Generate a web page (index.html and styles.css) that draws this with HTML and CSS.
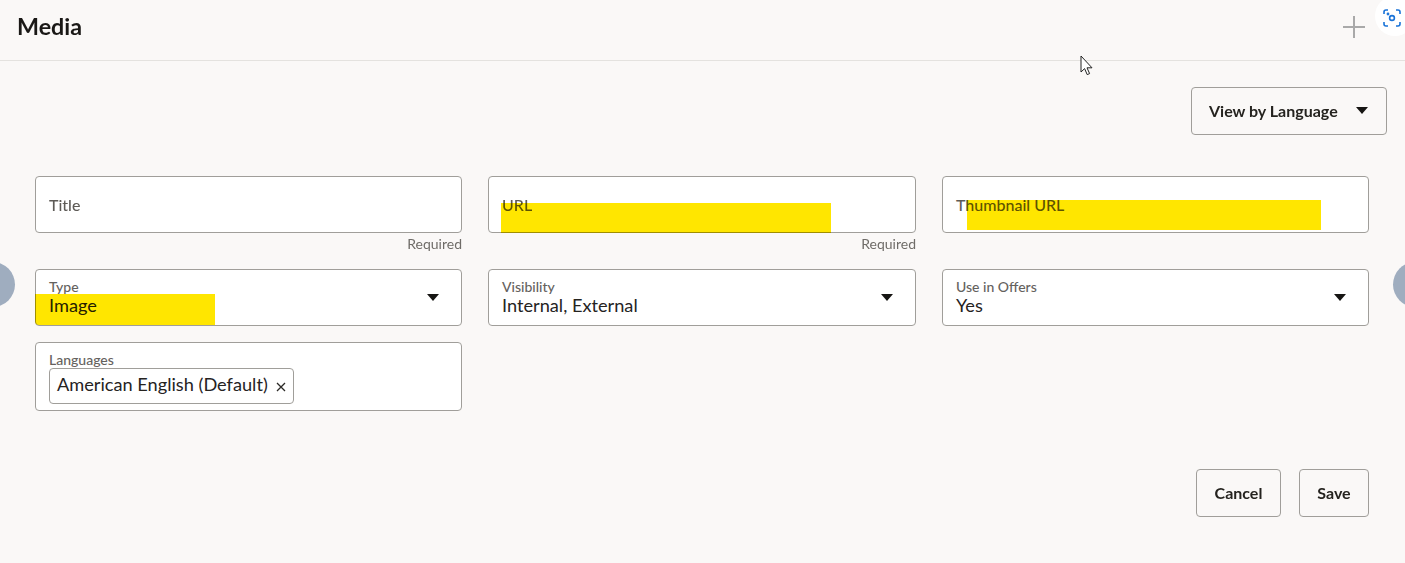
FILE: index.html
```html
<!DOCTYPE html>
<html lang="en">
<head>
<meta charset="utf-8">
<title>Media</title>
<link rel="stylesheet" href="styles.css">
</head>
<body>
<div class="page">
  <header class="header">
    <h1 class="title">Media</h1>
    <svg class="plus" width="24" height="24" viewBox="0 0 24 24"><path d="M12 1v22M1 12h22" stroke="#a9a9a9" stroke-width="2" fill="none"/></svg>
  </header>
  <div class="toolbar">
    <button class="btn btn-lang">View by Language<span class="caret"></span></button>
  </div>
  <form class="form">
    <div class="cell">
      <div class="field field-empty"><span class="placeholder">Title</span></div>
      <div class="help">Required</div>
    </div>
    <div class="cell">
      <div class="field field-empty"><span class="placeholder">URL</span><i class="mark mark-url"></i></div>
      <div class="help">Required</div>
    </div>
    <div class="cell">
      <div class="field field-empty"><span class="placeholder">Thumbnail URL</span><i class="mark mark-thumb"></i></div>
    </div>
    <div class="cell">
      <div class="field field-select">
        <div class="stack"><span class="label">Type</span><span class="value">Image</span></div>
        <span class="caret"></span><i class="mark mark-type"></i>
      </div>
    </div>
    <div class="cell">
      <div class="field field-select">
        <div class="stack"><span class="label">Visibility</span><span class="value">Internal, External</span></div>
        <span class="caret"></span>
      </div>
    </div>
    <div class="cell">
      <div class="field field-select">
        <div class="stack"><span class="label">Use in Offers</span><span class="value">Yes</span></div>
        <span class="caret"></span>
      </div>
    </div>
    <div class="cell">
      <div class="field field-chips">
        <span class="label">Languages</span>
        <span class="chip">American English (Default)<svg class="chip-x" width="10" height="10" viewBox="0 0 10 10"><path d="M1 1l8 8M9 1l-8 8" stroke="#2b2926" stroke-width="1.3" fill="none"/></svg></span>
      </div>
    </div>
  </form>
  <footer class="footer">
    <button class="btn btn-cancel">Cancel</button>
    <button class="btn btn-save">Save</button>
  </footer>
</div>
<span class="side side-left"></span>
<span class="side side-right"></span>
<svg class="pointer" width="14" height="22" viewBox="0 0 14 22"><path d="M1 1v16l3.6-3.4 2.6 6 2.4-1-2.6-5.8h5z" fill="#fff" stroke="#222" stroke-width="1"/></svg>
<span class="badge">
  <svg width="18" height="18" viewBox="0 0 18 18" fill="none" stroke="#1a73d8" stroke-width="1.6"><path d="M1 5V3a2 2 0 0 1 2-2h2M13 1h2a2 2 0 0 1 2 2v2M17 13v2a2 2 0 0 1-2 2h-2M5 17H3a2 2 0 0 1-2-2v-2"/><circle cx="9" cy="9" r="2.4"/><circle cx="5" cy="5" r=".6"/></svg>
</span>
</body>
</html>
```
FILE: styles.css
```css
* { box-sizing: border-box; }
html, body { margin: 0; height: 100%; }
body {
  background: #faf8f7;
  color: #201e1c;
  font-family: Lato, "Noto Sans", sans-serif;
  overflow: hidden;
  position: relative;
}
.page { display: flex; flex-direction: column; }
.header {
  height: 61px;
  border-bottom: 1px solid #e4e2df;
  display: flex;
  align-items: center;
  justify-content: space-between;
  padding: 0 39px 0 17px;
}
.title { margin: 0 0 9px; font-size: 23.3px; font-weight: 700; color: #1a1816; }
.plus { margin-top: -6px; }
.toolbar { display: flex; justify-content: flex-end; padding: 26px 18px 0 0; }
.btn {
  font: 700 16px Lato, "Noto Sans", sans-serif;
  color: #25231f;
  background: transparent;
  border: 1px solid #a09e9a;
  border-radius: 4px;
  height: 48px;
  padding: 0 0 2px;
}
.btn-lang {
  width: 196px;
  display: flex;
  align-items: center;
  justify-content: space-between;
  padding: 0 18px 2px 17px;
}
.caret {
  width: 0;
  height: 0;
  border-left: 6.5px solid transparent;
  border-right: 6.5px solid transparent;
  border-top: 7px solid #161513;
}
.form {
  display: grid;
  grid-template-columns: 427px 428px 427px;
  column-gap: 26px;
  padding: 41px 0 0 35px;
}
.cell { display: flex; flex-direction: column; margin-bottom: 16px; }
.field {
  position: relative;
  height: 57px;
  background: #fff;
  border: 1px solid #a09e9a;
  border-radius: 4px;
  padding: 0 13px;
}
.field-empty { display: flex; align-items: center; }
.placeholder { font-size: 16px; font-weight: 500; color: #5e5b57; }
.field-select { display: flex; align-items: center; justify-content: space-between; padding-right: 22px; }
.stack { display: flex; flex-direction: column; padding-bottom: 2px; }
.label { font-size: 14px; line-height: 17px; font-weight: 500; color: #65625e; display: block; }
.value { font-size: 18.2px; line-height: 21px; color: #25231f; }
.field-chips { height: 69px; padding-top: 8px; }
.chip {
  display: inline-flex;
  align-items: center;
  justify-content: space-between;
  width: 245px;
  height: 36px;
  padding: 0 7px 5px;
  border: 1px solid #a09e9a;
  border-radius: 4px;
  font-size: 18.2px;
  color: #25231f;
}
.chip-x { margin-top: 6px; }
.help { height: 20px; padding-top: 3px; text-align: right; font-size: 14px; line-height: 16px; color: #6f6c68; }
.mark { position: absolute; background: #ffe600; mix-blend-mode: multiply; }
.mark-type { left: -1px; top: 24px; width: 180px; height: 31px; border-radius: 0 0 0 4px; }
.mark-url { left: 12px; top: 26px; width: 330px; height: 30px; }
.mark-thumb { left: 24px; top: 23px; width: 354px; height: 30px; }
.footer { display: flex; justify-content: flex-end; gap: 18px; padding: 42px 36px 0 0; }
.btn-cancel { width: 85px; }
.btn-save { width: 70px; }
.side { position: absolute; width: 45px; height: 45px; border-radius: 50%; background: #9fadbf; top: 262px; }
.side-left { left: -30px; }
.side-right { left: 1393px; }
.pointer { position: absolute; left: 1080px; top: 55px; }
.badge {
  position: absolute;
  left: 1375px;
  top: -4px;
  width: 40px;
  height: 40px;
  border-radius: 50%;
  background: #fff;
  display: flex;
  align-items: center;
  padding: 4px 0 0 8px;
}
.badge svg { display: block; }
```
